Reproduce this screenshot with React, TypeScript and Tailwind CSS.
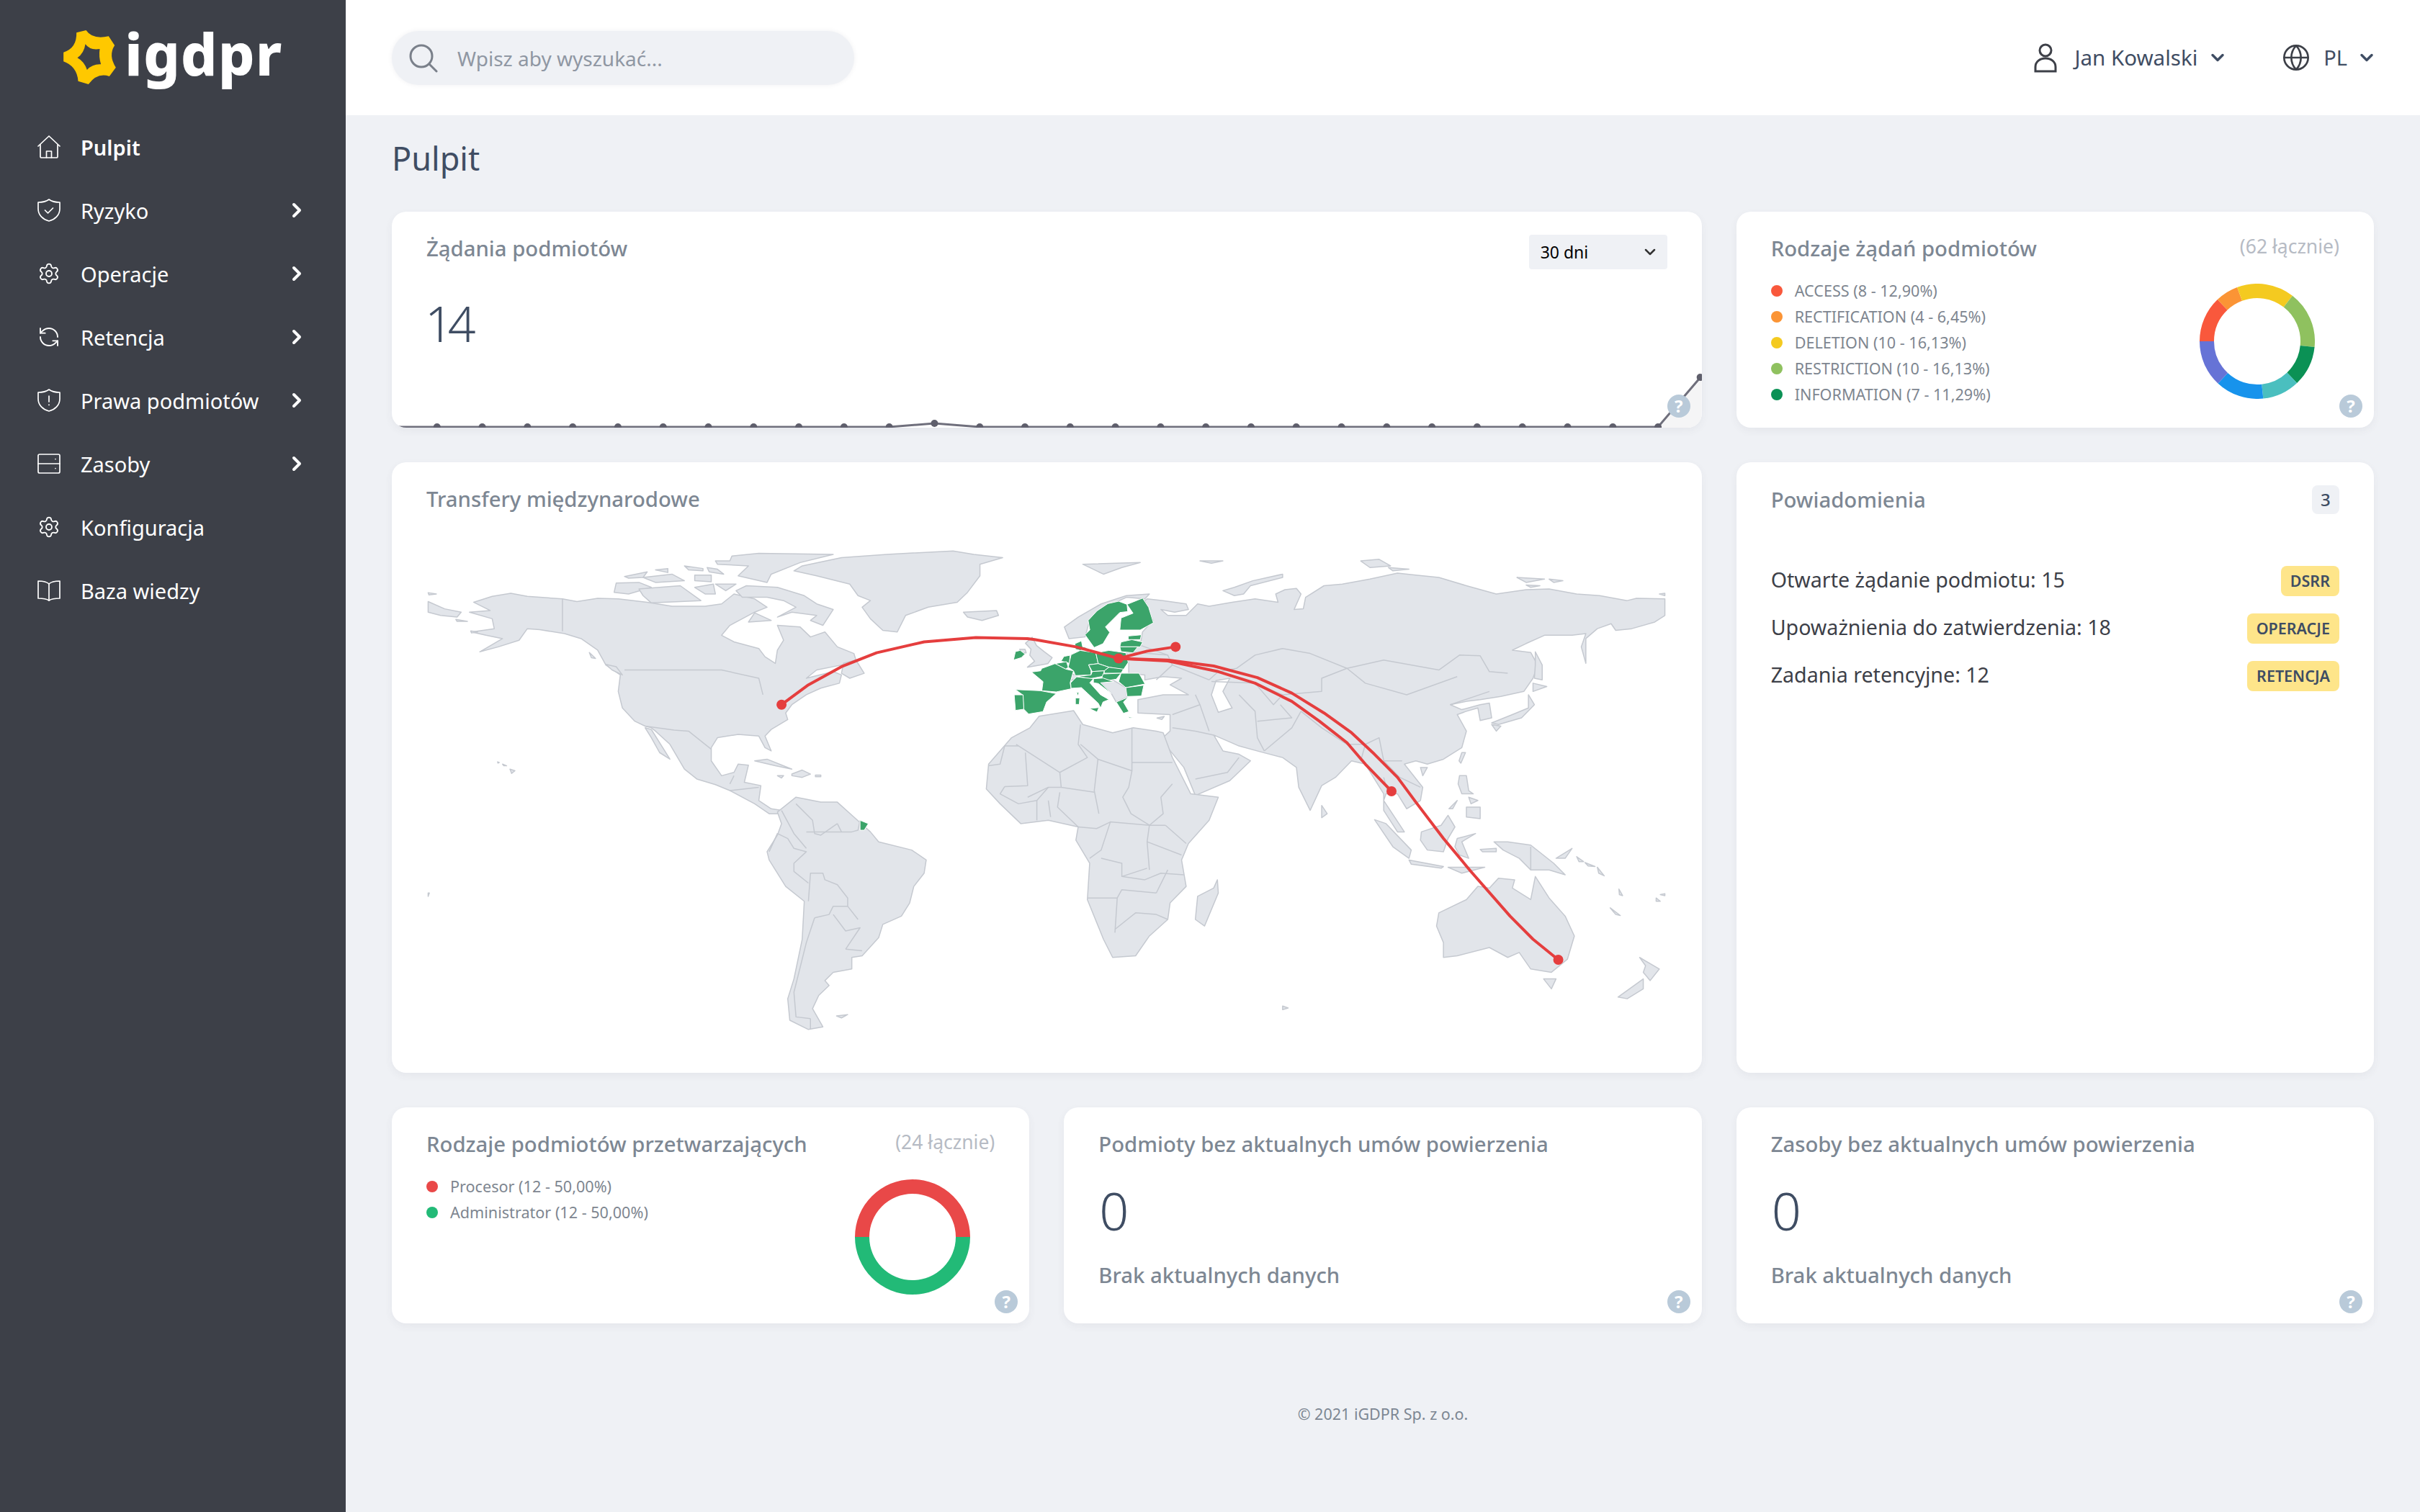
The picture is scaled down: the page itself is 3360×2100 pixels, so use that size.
import React from "react";
import { Settings, RefreshCcw, ChevronRight, ChevronDown, Globe } from "lucide-react";

const Z5 = "translate(560 740) scale(0.574 0.459)";
const Z6 = "translate(1360 740) scale(0.638 0.459)";
const Z10 = "translate(1460 800) scale(0.3333)";
const Z11 = "translate(1400 880) scale(0.3333)";
const LAND = "#e2e5ea";
const EDGE = "#c5c9d0";
const GREEN = "#3ba46a";
const RED = "#e53e3e";

const p5 = (x: number, y: number) => `${560 + x * 0.574},${740 + y * 0.459}`;
const p6 = (x: number, y: number) => `${1360 + x * 0.638},${740 + y * 0.459}`;

function Land({ points }: { points: string }) {
  return <polygon points={points} fill={LAND} stroke={EDGE} strokeWidth={1.5} vectorEffect="non-scaling-stroke" strokeLinejoin="round" />;
}
function Eu({ points }: { points: string }) {
  return <polygon points={points} fill={GREEN} stroke="#ffffff" strokeWidth={1} vectorEffect="non-scaling-stroke" strokeLinejoin="round" />;
}
function Line({ points }: { points: string }) {
  return <polyline points={points} fill="none" stroke={EDGE} strokeWidth={1.5} vectorEffect="non-scaling-stroke" strokeLinejoin="round" />;
}

const americas = [
  "170,210 215,192 260,183 300,192 385,200 420,208 470,198 520,200 590,210 650,222 730,222 770,215 800,185 850,200 880,225 850,240 820,260 790,280 770,310 800,330 860,350 875,375 900,395 905,355 920,325 905,280 960,285 985,315 1020,300 1050,345 1090,365 1095,385 1060,400 1000,415 975,440 1040,420 1060,430 1055,455 1010,470 975,490 940,520 925,545 930,565 890,595 875,615 890,660 875,650 860,615 810,610 760,620 745,650 745,690 770,735 800,725 810,700 835,703 825,755 865,765 860,810 890,835 915,840 905,850 885,850 850,820 790,780 755,762 710,745 680,715 645,640 610,600 600,590 585,585 560,570 530,530 520,480 525,430 490,400 470,355 430,320 390,305 330,293 300,290 280,325 230,345 185,360 240,320 200,310 165,300 220,290 215,260 160,240 210,235",
  "585,590 600,595 645,685 620,665 600,620",
  "965,100 1060,75 1170,65 1330,55 1380,65 1450,75 1395,95 1395,130 1365,180 1340,210 1270,225 1215,250 1195,300 1160,295 1130,260 1110,225 1130,205 1100,190 1080,155 1000,130 945,115",
  "1355,240 1435,235 1440,250 1400,265 1365,255",
  "905,845 950,800 1010,815 1050,815 1090,860 1130,905 1150,935 1230,960 1265,990 1260,1030 1235,1070 1225,1120 1205,1160 1160,1185 1150,1225 1110,1280 1085,1285 1085,1320 1040,1330 1020,1355 1030,1370 1005,1400 990,1440 1015,1495 980,1503 935,1475 930,1410 945,1350 965,1230 970,1115 925,1070 885,990 880,965 905,915 915,880",
  "60,208 100,230 140,240 130,255 90,250 60,240",
  "60,181 80,185 62,188",
  "127,262 155,268 130,268",
  "163,297 180,300 165,303",
  "535,132 590,118 580,135 545,137",
  "580,135 650,125 680,145 610,150",
  "610,112 640,108 640,120",
  "680,100 725,108 725,115 690,112",
  "735,105 760,110 775,125 740,118",
  "705,128 745,128 745,148 705,145",
  "515,152 570,150 600,165 545,185 510,180",
  "570,170 670,160 720,205 600,212 580,190",
  "705,165 750,155 755,185 730,185",
  "755,155 805,155 780,175",
  "805,175 830,160 905,165 970,190 1000,215 1040,232 1015,280 985,265 1000,250 940,240 905,255 950,225 920,205 880,195 850,195 820,195",
  "850,242 890,265 835,270",
  "795,70 860,62 1040,65 960,90 890,125 880,150 810,130 835,100 760,95 755,85 790,85",
  "1065,395 1095,385 1115,425 1080,440 1060,425",
  "850,690 880,685 940,715 900,705",
  "940,730 965,718 985,730 965,740 940,735",
  "905,735 920,735 915,742",
  "997,733 1010,733 1010,738 997,738",
  "228,693 232,695 229,697",
  "240,700 250,705 243,705",
  "258,715 270,720 262,728",
  "490,398 515,405 530,430 505,415",
  "450,362 465,380 455,378",
  "1048,1462 1075,1458 1060,1468",
  "60,1090 63,1090 60,1100",
];
const americaLines = [
  "385,200 385,298",
  "535,415 770,415 860,440 870,490",
  "585,585 655,597 690,600 745,655",
  "790,760 800,735",
  "790,780 860,770",
  "915,840 945,910 975,955",
  "950,820 990,870 995,910 1010,915 1050,880",
  "1050,880 1060,905 1085,905 1100,900 1105,870",
  "975,905 1060,905",
  "885,965 905,910 930,925 945,955 975,965 945,1000 945,1025 980,1060",
  "980,1115 985,1030 1015,1030 1020,1050 1050,1065 1075,1105 1075,1130 1100,1170",
  "995,1165 1030,1155 1040,1130 1075,1130",
  "995,1165 975,1240 945,1390 950,1465 985,1470",
  "1040,1155 1070,1205 1105,1195 1070,1260",
  "1070,1260 1110,1265",
  "985,1470 985,1503",
];
const eurasia = [
  "365,200 400,205 450,215 455,232 425,240 395,232 410,250 450,250 475,215 500,222 550,210 600,200 650,210 645,185 665,172 690,168 700,185 685,232 705,230 710,195 750,160 790,155 850,140 910,122 950,128 1000,135 1060,160 1125,185 1190,172 1240,170 1300,185 1350,190 1410,205 1430,198 1492,200 1492,250 1470,270 1420,290 1385,295 1375,275 1345,290 1320,320 1320,395 1310,345 1320,305 1290,310 1230,310 1190,335 1160,355 1200,362 1215,400 1205,440 1185,480 1135,495 1090,505 1060,510 1025,520 1050,535 1090,520 1110,515 1115,560 1090,568 1085,530 1060,540 1040,550 1060,600 1050,650 1010,685 975,700 950,690 925,700 965,770 960,810 930,835 910,790 885,790 880,810 925,905 910,905 880,840 880,790 840,700 810,690 775,740 745,765 720,840 695,770 690,710 660,680 610,662 565,645 540,630 510,612 530,660 565,670 590,690 545,750 470,795 445,710 395,625 415,600 415,550 345,545 345,505 400,490 455,490 415,460 440,440 400,435 360,445 360,430 325,425 325,395 320,360 350,340 355,300 378,265 360,205",
  "185,285 215,255 265,215 320,190 370,185 360,200 320,195 300,208 240,265 230,315 195,320",
  "130,555 205,538 225,580 290,605 335,590 385,600 400,605 420,680 460,790 520,800 500,870 455,940 440,990 450,1070 415,1120 410,1170 370,1220 340,1280 290,1285 270,1230 235,1110 240,1000 210,930 215,890 150,870 90,880 45,820 15,775 20,700 70,620 110,590",
  "225,95 350,90 310,105 270,125",
  "480,85 530,85 505,92",
  "660,125 595,145 555,165 530,175 555,190 575,185 590,160 660,135",
  "830,85 870,80 895,100 850,105",
  "890,105 935,110 900,115",
  "1170,135 1230,140 1190,150",
  "1190,158 1220,160 1200,165",
  "1240,140 1270,145 1250,150",
  "1480,185 1492,183 1492,190",
  "1210,360 1225,400 1225,445 1208,440 1210,400",
  "1205,455 1235,465 1205,480",
  "1195,490 1208,520 1180,560 1130,580 1115,575 1160,550 1195,530",
  "1115,580 1135,585 1125,600",
  "1050,665 1058,665 1048,697 1044,690",
  "960,710 975,710 965,735",
  "1045,735 1060,735 1065,780 1075,790 1050,790 1042,760",
  "1060,830 1090,830 1090,865 1060,860",
  "1022,835 1040,810 1030,835",
  "1065,800 1085,810 1070,820",
  "860,868 885,880 940,960 935,985 900,950",
  "935,990 1010,1010 1005,1015 940,1003",
  "962,905 1005,885 1020,855 1035,890 1020,925 1010,965 975,960 960,930",
  "1040,925 1080,910 1050,935 1065,985 1045,975 1035,950",
  "1120,935 1150,935 1200,945 1250,1000 1275,1035 1240,1020 1200,1020 1175,985 1140,960",
  "1090,958 1125,955 1125,965 1095,965",
  "1020,1012 1100,1012 1050,1030",
  "1255,985 1290,955 1275,985",
  "1300,980 1315,995 1305,995",
  "1318,998 1340,1010 1325,1008",
  "1345,1012 1360,1038 1348,1030",
  "1000,1150 1060,1110 1085,1070 1110,1075 1130,1045 1165,1050 1160,1075 1200,1110 1210,1040 1240,1105 1275,1160 1295,1220 1280,1290 1245,1330 1200,1320 1175,1270 1150,1285 1110,1255 1040,1280 1010,1285 1010,1240 995,1190",
  "1228,1350 1255,1350 1245,1380",
  "1437,1285 1480,1320 1460,1355 1445,1330 1450,1310",
  "1445,1350 1445,1380 1410,1410 1390,1405",
  "745,825 757,850 745,862",
  "518,1050 520,1090 490,1190 470,1170 475,1100 510,1075",
  "1392,1078 1400,1098 1393,1095",
  "1373,1135 1395,1158 1385,1155",
  "1473,1105 1482,1115 1473,1115",
  "1482,1095 1492,1092 1492,1098",
  "660,1432 672,1438 660,1443",
];
const asiaLines = [
  "500,445 520,420 560,410 600,370 660,350 720,365 800,410",
  "800,410 880,385 1000,415 1045,370 1090,372 1110,420 1150,425",
  "800,410 840,455 930,490 1040,435",
  "505,450 600,455 660,490 745,480 745,440 800,410",
  "600,455 640,520 660,490",
  "565,490 600,540 605,620 620,660",
  "605,570 680,560 655,520",
  "480,520 500,600",
  "420,550 480,520 470,490",
  "420,590 470,600 510,612",
  "470,745 540,725 565,680",
  "620,660 680,590 700,540",
  "700,540 745,590 800,640 840,640 830,690",
  "840,640 870,620 880,690 920,690",
  "880,690 915,740 960,770",
  "320,360 410,370 420,400 385,445",
  "350,340 410,370",
  "1025,520 1110,480",
  "1200,950 1200,1020",
  "420,400 500,445",
  "880,740 890,790",
];
const africaLines = [
  "85,645 55,645 45,700 20,705",
  "80,640 175,725 235,680 215,640 220,580",
  "100,665 105,765 55,768",
  "220,640 258,685 332,720 332,590",
  "332,695 420,695",
  "175,725 178,770 150,770 105,800",
  "258,685 250,780 260,850",
  "332,720 325,770 312,800 330,850 370,885",
  "420,760 395,800 400,850 370,885",
  "178,770 250,785",
  "55,768 45,790 85,820 125,810 150,770",
  "125,810 125,870",
  "150,810 155,860",
  "175,785 170,830 215,890",
  "215,890 255,895 285,875 370,885 405,885",
  "285,875 265,960 240,985",
  "405,885 450,940",
  "365,935 440,975",
  "370,885 365,935 370,1020",
  "265,985 310,1000 310,1040 365,1015",
  "310,1040 360,1050 395,1030 445,1035",
  "235,1105 300,1105 310,1080 385,1090",
  "300,1105 295,1210",
  "295,1200 340,1150 385,1155 410,1170",
  "385,1090 410,1020",
];
const eu10 = [
  "280,105 315,118 318,148 285,152 225,212 243,235 215,282 178,298 140,245 160,225 153,185 190,145 235,115",
  "315,118 380,92 405,130 425,195 370,225 285,225 290,175 340,155",
  "320,250 375,245 370,265 320,265",
  "290,275 335,265 380,275 370,295 285,295",
  "285,295 360,295 340,320 290,315",
];
const grey11 = [
  "72,40 100,15 118,50 150,75 183,100 165,125 110,135 80,140 110,115 90,90 95,65",
  "48,65 70,65 75,80 55,80",
  "385,205 440,195 490,225 495,265 450,285 430,250",
  "245,185 270,170 300,172 310,180 260,195",
  "620,352 650,345 640,358",
];
const eu11 = [
  "22,110 30,75 50,70 70,85 55,100",
  "220,115 232,95 258,90 255,125 245,120",
  "195,125 243,117 250,140 240,148",
  "97,160 135,155 140,145 195,125 240,148 272,155 258,205 262,230 200,243 140,238 145,200",
  "30,233 135,238 200,250 160,285 145,325 85,335 65,315 60,255",
  "25,255 62,255 65,315 30,320",
  "262,88 300,70 365,80 375,125 335,130 345,155 345,172 280,175 272,155 250,140",
  "278,42 305,30 310,55 335,60 300,70 280,65",
  "365,80 420,70 490,80 500,120 480,150 420,140 375,125",
  "335,130 375,125 420,140 400,155 350,158",
  "420,140 480,148 470,165 400,165 400,155",
  "290,178 345,172 350,158 400,155 395,178 340,188",
  "395,168 470,165 450,190 405,197 390,185",
  "470,165 545,165 570,210 490,225 460,200",
  "490,225 565,215 555,260 495,262",
  "355,188 395,185 440,200 385,205 430,250 375,208 355,205",
  "260,205 285,180 355,188 340,205 385,255 420,275 395,285 385,310 375,290 305,225 262,228",
  "285,245 295,245 290,260",
  "280,268 298,268 296,295 280,295",
  "338,312 378,308 370,327",
  "450,285 500,265 480,285 503,325 480,332",
  "500,347 525,350 505,352",
];

const arcs = [
  [...[[915, 520], [980, 460], [1060, 405], [1145, 363], [1260, 330], [1385, 317], [1510, 320]].map(([x, y]) => p5(x, y)), ...[[120, 323], [210, 345], [303, 380]].map(([x, y]) => p6(x, y))].join(" "),
  [[303, 380], [365, 358], [427, 345]].map(([x, y]) => p6(x, y)).join(" "),
  [[303, 380], [410, 388], [520, 420], [600, 455], [680, 510], [740, 570], [800, 635], [840, 700], [897, 782]].map(([x, y]) => p6(x, y)).join(" "),
  [[303, 380], [410, 385], [510, 403], [605, 438], [680, 485], [750, 545], [810, 605], [860, 670], [910, 740], [950, 815], [1010, 925], [1070, 1025], [1155, 1160], [1205, 1230], [1260, 1292]].map(([x, y]) => p6(x, y)).join(" "),
];

function WorldMap() {
  const dots = [p5(915, 520), p6(303, 380), p6(427, 345), p6(897, 782), p6(1260, 1292)];
  return (
    <svg viewBox="544 713 1819 777" className="block w-[calc(100%+96px)] h-[777px] -mx-12 shrink-0">
      <g transform={Z5}>
        {americas.map((p, i) => <Land key={i} points={p} />)}
        {americaLines.map((p, i) => <Line key={i} points={p} />)}
        <Eu points="1105,870 1125,880 1115,900 1105,900" />
      </g>
      <g transform={Z6}>
        {eurasia.map((p, i) => <Land key={i} points={p} />)}
        <polygon points="515,447 545,440 530,480 550,530 520,543 505,490" fill="#fff" stroke={EDGE} strokeWidth={1.5} vectorEffect="non-scaling-stroke" />
        {asiaLines.map((p, i) => <Line key={i} points={p} />)}
        {africaLines.map((p, i) => <Line key={i} points={p} />)}
      </g>
      <g transform={Z11}>
        {grey11.map((p, i) => <Land key={i} points={p} />)}
        {eu11.map((p, i) => <Eu key={i} points={p} />)}
      </g>
      <g transform={Z10}>
        {eu10.map((p, i) => <Eu key={i} points={p} />)}
      </g>
      {arcs.map((p, i) => <polyline key={i} points={p} fill="none" stroke={RED} strokeWidth={4} strokeLinejoin="round" />)}
      {dots.map((d, i) => {
        const [x, y] = d.split(",");
        return <circle key={i} cx={x} cy={y} r={7} fill={RED} />;
      })}
    </svg>
  );
}

function HomeIcon() {
  return <svg viewBox="0 0 32 32" className="w-8 h-8" fill="none" stroke="currentColor" strokeWidth="1.7" strokeLinecap="round" strokeLinejoin="round"><path d="M1 15 16 1l15 14" /><path d="M4 13v16.5a1.5 1.5 0 0 0 1.5 1.5h21a1.5 1.5 0 0 0 1.5-1.5V13" /><path d="M12.5 31v-9h7v9" /></svg>;
}
function ShieldCheckIcon() {
  return <svg viewBox="0 0 32 32" className="w-8 h-8" fill="none" stroke="currentColor" strokeWidth="1.7" strokeLinecap="round" strokeLinejoin="round"><path d="M16 1c-4 3-9 4-15 4v9c0 9 7 15 15 17 8-2 15-8 15-17V5c-6 0-11-1-15-4Z" /><path d="m10.5 16 4 4 7-7" /></svg>;
}
function ShieldAlertIcon() {
  return <svg viewBox="0 0 32 32" className="w-8 h-8" fill="none" stroke="currentColor" strokeWidth="1.7" strokeLinecap="round" strokeLinejoin="round"><path d="M16 1c-4 3-9 4-15 4v9c0 9 7 15 15 17 8-2 15-8 15-17V5c-6 0-11-1-15-4Z" /><path d="M16 10v8M16 22v.5" /></svg>;
}
function ServerIcon() {
  return <svg viewBox="0 0 32 32" className="w-8 h-8" fill="none" stroke="currentColor" strokeWidth="1.7" strokeLinecap="round" strokeLinejoin="round"><path d="M3 3h26a2 2 0 0 1 2 2v22a2 2 0 0 1-2 2H3a2 2 0 0 1-2-2V5a2 2 0 0 1 2-2Z" /><path d="M1 16h30" /><path d="M25 9.5v.1M25 22.5v.1" /></svg>;
}
function BookIcon() {
  return <svg viewBox="0 0 32 32" className="w-8 h-8" fill="none" stroke="currentColor" strokeWidth="1.7" strokeLinecap="round" strokeLinejoin="round"><path d="M16 7c-3-3-9-4-15-4v24c6 0 12 1 15 3 3-2 9-3 15-3V3c-6 0-12 1-15 4Z" /><path d="M16 7v23" /></svg>;
}

function NavItem({ icon, label, bold, arrow }: { icon: React.ReactNode; label: string; bold?: boolean; arrow?: boolean }) {
  return (
    <div className="flex items-center h-[88px] pl-[52px] pr-[52px] text-white">
      <span className="w-8 h-8 shrink-0">{icon}</span>
      <span className={`ml-[28px] flex-1 text-[29px] leading-none ${bold ? "font-semibold" : "font-normal"}`}>{label}</span>
      {arrow && <ChevronRight className="w-8 h-8" strokeWidth={3} />}
    </div>
  );
}

function Logo() {
  return (
    <div className="flex items-center h-[160px] pl-[88px] pb-[2px]">
      <svg viewBox="264 120 218 225" className="w-[73px] h-[75px] shrink-0">
        <path fillRule="evenodd" fill="#ffc800" d="M318 130L358 120Q385 160 452 145L477 183Q450 225 482 275L455 312Q405 295 368 345L325 332Q320 270 264 250L264 212Q320 195 318 130ZM355 178Q375 205 415 198Q410 230 420 262Q385 260 362 285Q350 250 322 235Q350 215 355 178Z" />
      </svg>
      <span className="ml-[12px] text-[80px] leading-none font-extrabold text-white tracking-[1px] -mt-[10px]">igdpr</span>
    </div>
  );
}

function Sidebar() {
  return (
    <aside className="w-[480px] shrink-0 bg-[#3d4048] min-h-[2100px]">
      <Logo />
      <NavItem icon={<HomeIcon />} label="Pulpit" bold />
      <NavItem icon={<ShieldCheckIcon />} label="Ryzyko" arrow />
      <NavItem icon={<Settings className="w-8 h-8" strokeWidth={1.4} />} label="Operacje" arrow />
      <NavItem icon={<RefreshCcw className="w-8 h-8" strokeWidth={1.4} />} label="Retencja" arrow />
      <NavItem icon={<ShieldAlertIcon />} label="Prawa podmiotów" arrow />
      <NavItem icon={<ServerIcon />} label="Zasoby" arrow />
      <NavItem icon={<Settings className="w-8 h-8" strokeWidth={1.4} />} label="Konfiguracja" />
      <NavItem icon={<BookIcon />} label="Baza wiedzy" />
    </aside>
  );
}

function Header() {
  return (
    <header className="h-[160px] bg-white flex items-center pl-[64px] pr-[60px]">
      <div className="w-[642px] h-[75px] rounded-full bg-[#eff1f5] shadow-[0_0_6px_rgba(60,70,90,0.08)] flex items-center pl-[24px] mt-[1px]">
        <svg viewBox="0 0 40 40" className="w-10 h-10 shrink-0" fill="none" stroke="#7a808a" strokeWidth="3" strokeLinecap="round"><circle cx="17" cy="17" r="15" /><path d="M28 28l10 10" /></svg>
        <span className="ml-[27px] text-[28px] text-[#8f97a3]">Wpisz aby wyszukać...</span>
      </div>
      <div className="flex-1" />
      <svg viewBox="0 0 32 41" className="w-[32px] h-[41px]" fill="none" stroke="#3d4048" strokeWidth="3"><circle cx="16" cy="10" r="8" /><path d="M2 39v-6c0-7 6-12 14-12s14 5 14 12v6Z" /></svg>
      <span className="ml-[24px] text-[29.5px] text-[#3f4d63]">Jan Kowalski</span>
      <ChevronDown className="ml-[14px] w-7 h-7 text-[#3f4d63]" strokeWidth={3} />
      <Globe className="ml-[75px] w-10 h-10 text-[#3d4048]" strokeWidth={1.6} />
      <span className="ml-[18px] text-[29px] text-[#3f4d63]">PL</span>
      <ChevronDown className="ml-[13px] w-7 h-7 text-[#3f4d63]" strokeWidth={3} />
    </header>
  );
}

function Help() {
  return (
    <span className="absolute right-[16px] bottom-[14px] w-8 h-8 rounded-full bg-[#b9cad9] text-white text-[24px] font-bold leading-8 text-center">?</span>
  );
}

function Card({ children, className = "" }: { children: React.ReactNode; className?: string }) {
  return <section className={`relative overflow-hidden bg-white rounded-[20px] shadow-[0_4px_12px_rgba(60,70,90,0.06)] px-12 pt-[31px] ${className}`}>{children}</section>;
}

function Title({ children }: { children: React.ReactNode }) {
  return <h2 className="h-10 leading-10 text-[29.3px] font-medium text-[#7d8793] whitespace-nowrap">{children}</h2>;
}

function polar(cx: number, cy: number, r: number, deg: number) {
  const a = ((deg - 90) * Math.PI) / 180;
  return [cx + r * Math.cos(a), cy + r * Math.sin(a)];
}
function arc(a0: number, a1: number) {
  const [x0, y0] = polar(80, 80, 80, a0);
  const [x1, y1] = polar(80, 80, 80, a1);
  const [x2, y2] = polar(80, 80, 60, a1);
  const [x3, y3] = polar(80, 80, 60, a0);
  const large = a1 - a0 > 180 ? 1 : 0;
  return `M${x0} ${y0}A80 80 0 ${large} 1 ${x1} ${y1}L${x2} ${y2}A60 60 0 ${large} 0 ${x3} ${y3}Z`;
}

function Donut({ segments }: { segments: [number, number, string][] }) {
  return (
    <svg viewBox="0 0 160 160" className="w-[160px] h-[160px] shrink-0 mr-[34px] mt-[8px]">
      {segments.map(([a, b, c], i) => <path key={i} d={arc(a, b)} fill={c} />)}
    </svg>
  );
}

function DonutCard({ title, total, legend, segments }: { title: string; total: string; legend: [string, string][]; segments: [number, number, string][] }) {
  return (
    <Card className="h-[300px]">
      <div className="flex justify-between">
        <Title>{title}</Title>
        <span className="text-[26.5px] leading-[34px] text-[#b6bbc4]">{total}</span>
      </div>
      <div className="flex justify-between mt-[21px]">
        <ul>
          {legend.map(([t, c]) => (
            <li key={t} className="flex items-center h-9 text-[21.6px] text-[#7e8690] whitespace-nowrap">
              <span className="w-4 h-4 rounded-full mr-[17px] shrink-0" style={{ backgroundColor: c }} />
              {t}
            </li>
          ))}
        </ul>
        <Donut segments={segments} />
      </div>
      <Help />
    </Card>
  );
}

function Sparkline() {
  const pts = Array.from({ length: 29 }, (_, i) => [544 + i * 62.8, i === 12 ? 588 : 593] as [number, number]);
  const line = [...pts, [2363, 522] as [number, number]].map((p) => p.join(",")).join(" ");
  return (
    <svg viewBox="544 510 1819 84" className="absolute left-0 bottom-0 w-full h-[84px]">
      <polygon points="2304,594 2363,522 2363,594" fill="#f5f5f6" />
      <polyline points={line} fill="none" stroke="#6f6f7c" strokeWidth={3} />
      {pts.map(([x, y], i) => <circle key={i} cx={x} cy={y} r={5} fill="#5f5f6c" />)}
      <circle cx={2361} cy={524} r={5} fill="#5f5f6c" />
    </svg>
  );
}

function Pill({ children, tall = true }: { children: React.ReactNode; tall?: boolean }) {
  return <span className={`flex items-center px-[13px] rounded-[8px] bg-[#fee58a] text-[#3f4d63] text-[21.5px] font-semibold ${tall ? "h-[42px] mt-1" : "h-[34px] -mt-[2px]"}`}>{children}</span>;
}

function Notice({ text, badge, tall }: { text: string; badge: string; tall?: boolean }) {
  return (
    <div className="flex items-center justify-between h-[66px] text-[28.6px] text-[#3d4048]">
      <span>{text}</span>
      <Pill tall={tall}>{badge}</Pill>
    </div>
  );
}

function Stat({ title }: { title: string }) {
  return (
    <Card className="h-[300px]">
      <Title>{title}</Title>
      <div className="text-[72px] leading-[84px] font-light text-[#3f4d63] mt-[30px] pl-[1px]">0</div>
      <div className="text-[29.3px] leading-10 font-medium text-[#7d8793] mt-[28px]">Brak aktualnych danych</div>
      <Help />
    </Card>
  );
}

export default function App() {
  return (
    <div className="flex w-[3360px] min-h-[2100px] bg-[#eff1f5] [font-family:'Noto_Sans',sans-serif]">
      <Sidebar />
      <main className="flex-1 min-w-0">
        <Header />
        <div className="px-16">
          <h1 className="h-[134px] pb-[14px] flex items-center text-[45px] text-[#3f4d63] font-normal">Pulpit</h1>
          <div className="grid grid-cols-3 gap-12">
            <Card className="col-span-2 h-[300px]">
              <div className="flex justify-between">
                <Title>Żądania podmiotów</Title>
                <div className="w-[192px] h-12 rounded bg-[#eff1f5] flex items-center justify-between pl-4 pr-3 text-[23px] text-black mt-[1px]">
                  30 dni
                  <ChevronDown className="w-6 h-6 text-[#333]" strokeWidth={2.5} />
                </div>
              </div>
              <div className="text-[68px] leading-[84px] font-light tracking-[-7px] -ml-[2px] text-[#3f4d63] mt-[33px]">14</div>
              <Sparkline />
              <Help />
            </Card>
            <DonutCard
              title="Rodzaje żądań podmiotów"
              total="(62 łącznie)"
              legend={[
                ["ACCESS (8 - 12,90%)", "#f9583c"],
                ["RECTIFICATION (4 - 6,45%)", "#fb9435"],
                ["DELETION (10 - 16,13%)", "#f4ca20"],
                ["RESTRICTION (10 - 16,13%)", "#8fc15f"],
                ["INFORMATION (7 - 11,29%)", "#0b9155"],
              ]}
              segments={[
                [270, 316.4, "#f9583c"],
                [316.4, 339.6, "#fb9435"],
                [339.6, 397.7, "#f4ca20"],
                [37.7, 95.8, "#8fc15f"],
                [95.8, 136.4, "#0b9155"],
                [136.4, 174, "#4abfbf"],
                [174, 223, "#1793ec"],
                [223, 270, "#6673d6"],
              ]}
            />
            <Card className="col-span-2 h-[848px]">
              <Title>Transfery międzynarodowe</Title>
              <WorldMap />
            </Card>
            <Card className="h-[848px]">
              <div className="flex items-center justify-between mt-[1px]">
                <Title>Powiadomienia</Title>
                <span className="w-[38px] h-10 rounded-lg bg-[#eff1f5] text-[#3f4d63] text-[24px] font-medium flex items-center justify-center">3</span>
              </div>
              <div className="mt-[58px]">
                <Notice text="Otwarte żądanie podmiotu: 15" badge="DSRR" tall />
                <Notice text="Upoważnienia do zatwierdzenia: 18" badge="OPERACJE" tall />
                <Notice text="Zadania retencyjne: 12" badge="RETENCJA" />
              </div>
            </Card>
            <DonutCard
              title="Rodzaje podmiotów przetwarzających"
              total="(24 łącznie)"
              legend={[
                ["Procesor (12 - 50,00%)", "#e94848"],
                ["Administrator (12 - 50,00%)", "#22ba77"],
              ]}
              segments={[
                [270, 450, "#e94848"],
                [90, 270, "#22ba77"],
              ]}
            />
            <Stat title="Podmioty bez aktualnych umów powierzenia" />
            <Stat title="Zasoby bez aktualnych umów powierzenia" />
          </div>
          <footer className="text-center text-[21.5px] text-[#7d8793] mt-[110px]">© 2021 iGDPR Sp. z o.o.</footer>
        </div>
      </main>
    </div>
  );
}
